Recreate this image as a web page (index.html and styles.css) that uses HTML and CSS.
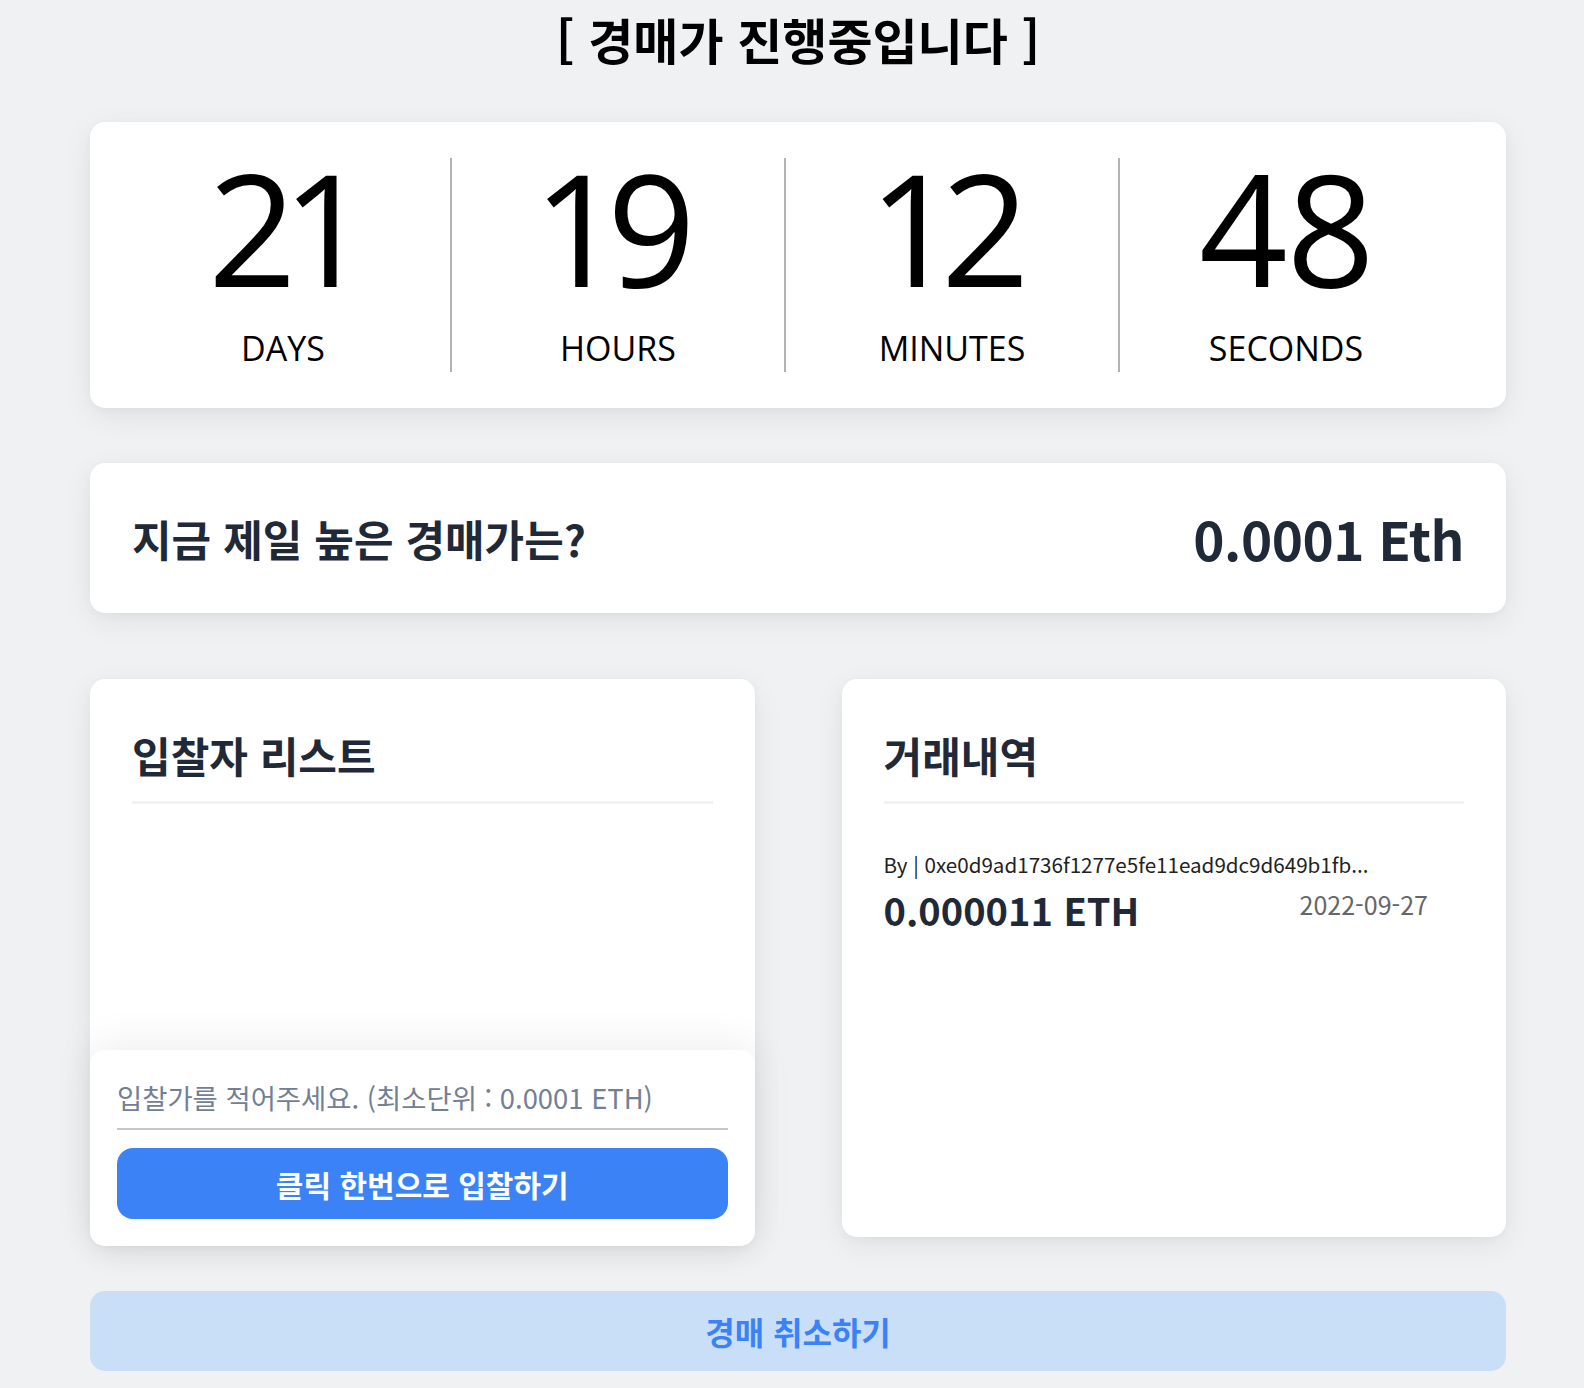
FILE: index.html
```html
<!DOCTYPE html>
<html lang="ko">
<head>
<meta charset="utf-8">
<title>경매 진행중</title>
<link rel="stylesheet" href="styles.css">
</head>
<body>
<main class="page">
  <h1 class="page-title">[ 경매가 진행중입니다 ]</h1>

  <section class="card timer">
    <div class="timer-col">
      <div class="timer-num">21</div>
      <div class="timer-label">DAYS</div>
    </div>
    <div class="timer-col">
      <div class="timer-num">19</div>
      <div class="timer-label">HOURS</div>
    </div>
    <div class="timer-col">
      <div class="timer-num">12</div>
      <div class="timer-label">MINUTES</div>
    </div>
    <div class="timer-col">
      <div class="timer-num">48</div>
      <div class="timer-label">SECONDS</div>
    </div>
  </section>

  <section class="card price">
    <div class="price-q">지금 제일 높은 경매가는?</div>
    <div class="price-v">0.0001 Eth</div>
  </section>

  <div class="panels">
    <section class="card panel bidders">
      <h2 class="panel-title">입찰자 리스트</h2>
      <div class="bidder-list"></div>
      <form class="bid-form">
        <input class="bid-input" type="text" placeholder="입찰가를 적어주세요. (최소단위 : 0.0001 ETH)">
        <button class="bid-btn" type="button">클릭 한번으로 입찰하기</button>
      </form>
    </section>

    <section class="card panel history">
      <h2 class="panel-title">거래내역</h2>
      <div class="tx">
        <div class="tx-by">By | 0xe0d9ad1736f1277e5fe11ead9dc9d649b1fb...</div>
        <div class="tx-row">
          <div class="tx-amount">0.000011 ETH</div>
          <div class="tx-date">2022-09-27</div>
        </div>
      </div>
    </section>
  </div>

  <button class="cancel-btn" type="button">경매 취소하기</button>
</main>
</body>
</html>
```

FILE: styles.css
```css
* {
  box-sizing: border-box;
}

html, body {
  margin: 0;
  padding: 0;
  background: #f0f1f3;
}

body {
  font-family: "Noto Sans CJK KR", "Noto Sans", sans-serif;
  color: #1f2937;
}

.page {
  padding: 11px 78px 17px 90px;
  display: flex;
  flex-direction: column;
}

.page-title {
  margin: 0 0 56px;
  font-size: 49px;
  line-height: 55px;
  font-weight: 700;
  color: #000;
  text-align: center;
}

.card {
  background: #fff;
  border-radius: 15px;
  box-shadow: 0 8px 30px rgba(0, 0, 0, 0.07), 0 2px 8px rgba(0, 0, 0, 0.03);
}

/* timer */
.timer {
  height: 286px;
  padding: 36px 54px 36px 26px;
  display: grid;
  grid-template-columns: repeat(4, 1fr);
}

.timer-col {
  display: flex;
  flex-direction: column;
  align-items: center;
}

.timer-col + .timer-col {
  border-left: 2px solid #b3b3b3;
}

.timer-num {
  font-family: "Open Sans", "Noto Sans", sans-serif;
  font-size: 155px;
  line-height: 138px;
  font-weight: 400;
  color: #000;
  font-variant-numeric: proportional-nums;
  letter-spacing: -3px;
}

.timer-label {
  margin-top: 35px;
  font-family: "Open Sans", "Noto Sans", sans-serif;
  font-size: 34px;
  line-height: 34px;
  color: #000;
}

/* price */
.price {
  margin-top: 55px;
  height: 150px;
  padding: 0 42px;
  display: flex;
  align-items: center;
  justify-content: space-between;
}

.price-q {
  font-size: 43px;
  font-weight: 700;
}

.price-v {
  font-size: 53px;
  font-weight: 700;
  letter-spacing: -0.5px;
}

/* panels */
.panels {
  margin-top: 66px;
  display: grid;
  grid-template-columns: 1fr 1fr;
  column-gap: 87px;
  align-items: start;
}

.panel {
  display: flex;
  flex-direction: column;
}

.panel-title {
  margin: 0 42px;
  padding: 46px 0 16px;
  font-size: 42px;
  line-height: 60px;
  font-weight: 700;
  border-bottom: 3px solid #f1f2f4;
}

.bidders {
  height: 567px;
}

.bidder-list {
  flex: 1;
}

.bid-form {
  margin: 0;
  background: #fff;
  border-radius: 15px;
  box-shadow: 0 -6px 40px rgba(0, 0, 0, 0.07);
  padding: 16px 27px 27px;
  display: flex;
  flex-direction: column;
  gap: 18px;
}

.bid-input {
  height: 64px;
  border: none;
  border-bottom: 2px solid #c4c6ca;
  outline: none;
  padding: 0;
  font-family: "Noto Sans CJK KR", "Noto Sans", sans-serif;
  font-size: 27.4px;
  color: #1f2937;
  background: transparent;
}

.bid-input::placeholder {
  color: #718096;
}

.bid-btn {
  height: 71px;
  border: none;
  border-radius: 16px;
  background: #3b82f6;
  color: #fff;
  font-family: "Noto Sans CJK KR", "Noto Sans", sans-serif;
  font-size: 30px;
  font-weight: 700;
}

.history {
  min-height: 558px;
}

.tx {
  padding: 45px 78px 0 42px;
}

.tx-by {
  font-size: 20.6px;
  line-height: 30px;
  color: #222;
}

.tx-row {
  margin-top: 7px;
  display: flex;
  justify-content: space-between;
  align-items: flex-start;
}

.tx-amount {
  font-size: 38px;
  line-height: 48px;
  font-weight: 700;
  color: #1f2937;
}

.tx-date {
  font-size: 25px;
  line-height: 36px;
  color: #666;
}

.cancel-btn {
  margin-top: 45px;
  height: 80px;
  border: none;
  border-radius: 15px;
  background: #c9dff8;
  color: #3b82f6;
  font-family: "Noto Sans CJK KR", "Noto Sans", sans-serif;
  font-size: 32px;
  font-weight: 700;
}
```
